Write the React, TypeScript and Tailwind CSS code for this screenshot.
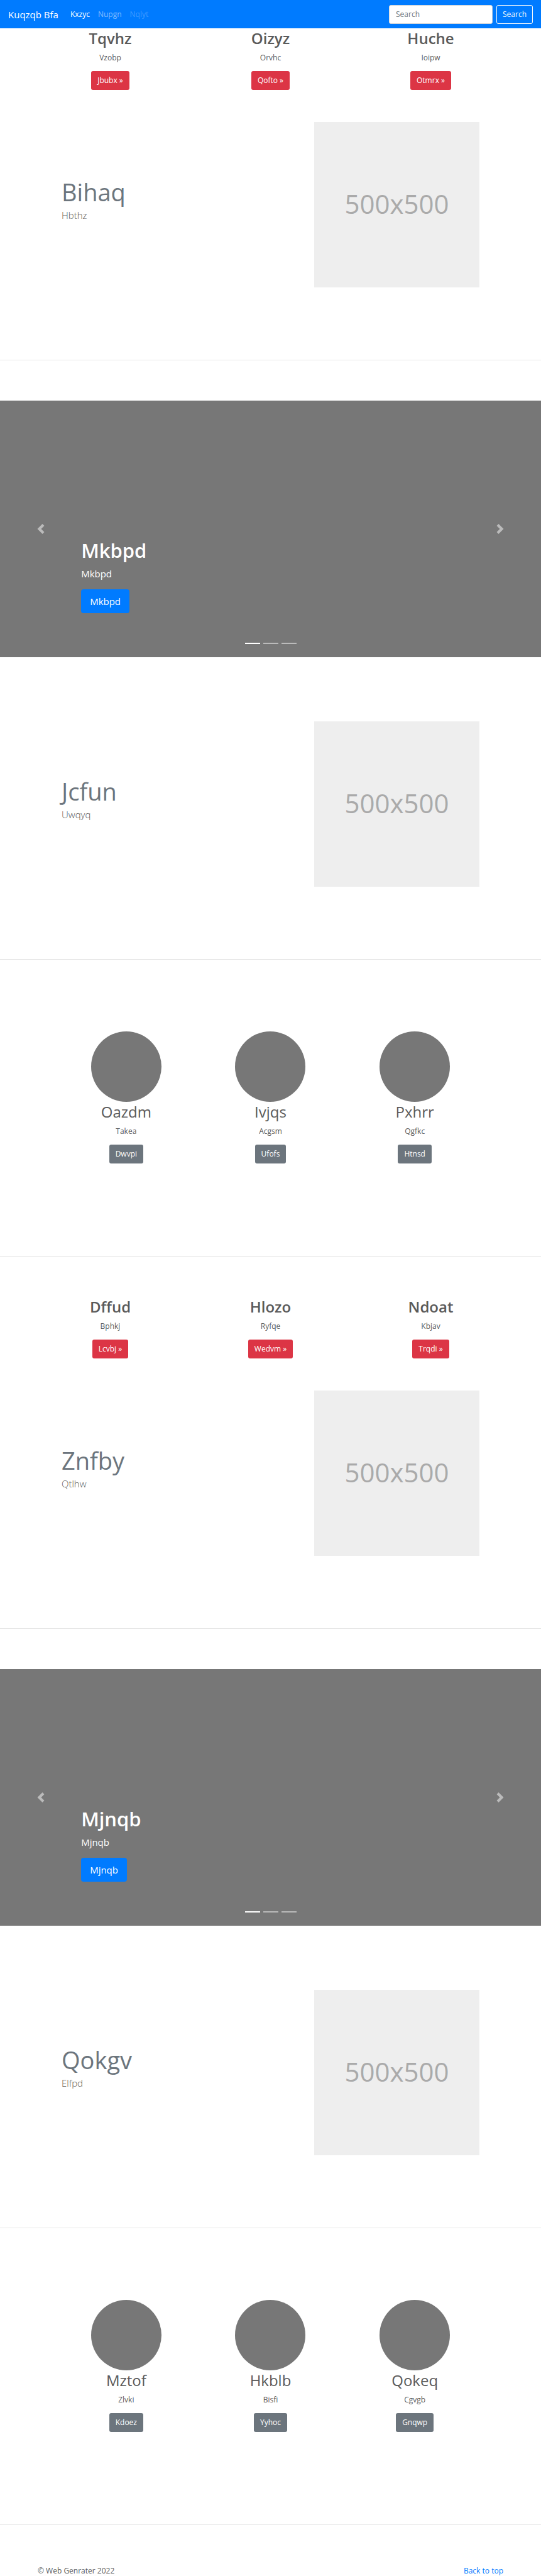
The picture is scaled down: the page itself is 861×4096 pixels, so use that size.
type Item = { title: string; text: string; action: string };
type Feature = { title: string; text: string };
type Group = {
  links: Item[];
  first: Feature;
  slide: string;
  second: Feature;
  circles: Item[];
};

const groups: Group[] = [
  {
    links: [
      { title: "Tqvhz", text: "Vzobp", action: "Jbubx" },
      { title: "Oizyz", text: "Orvhc", action: "Qofto" },
      { title: "Huche", text: "Ioipw", action: "Otmrx" },
    ],
    first: { title: "Bihaq", text: "Hbthz" },
    slide: "Mkbpd",
    second: { title: "Jcfun", text: "Uwqyq" },
    circles: [
      { title: "Oazdm", text: "Takea", action: "Dwvpi" },
      { title: "Ivjqs", text: "Acgsm", action: "Ufofs" },
      { title: "Pxhrr", text: "Qgfkc", action: "Htnsd" },
    ],
  },
  {
    links: [
      { title: "Dffud", text: "Bphkj", action: "Lcvbj" },
      { title: "Hlozo", text: "Ryfqe", action: "Wedvm" },
      { title: "Ndoat", text: "Kbjav", action: "Trqdi" },
    ],
    first: { title: "Znfby", text: "Qtlhw" },
    slide: "Mjnqb",
    second: { title: "Qokgv", text: "Elfpd" },
    circles: [
      { title: "Mztof", text: "Zlvki", action: "Kdoez" },
      { title: "Hkblb", text: "Bisfi", action: "Yyhoc" },
      { title: "Qokeq", text: "Cgvgb", action: "Gnqwp" },
    ],
  },
];

function Navbar() {
  return (
    <header className="flex h-[45px] items-center bg-[#007bff] px-[13px] text-white">
      <a href="#" className="text-[15px] leading-6">Kuqzqb Bfa</a>
      <nav className="ml-[19px] flex gap-[13px] text-xs">
        <a href="#">Kxzyc</a>
        <a href="#" className="text-white/50">Nupgn</a>
        <a href="#" aria-disabled="true" className="text-white/25">Nqlyt</a>
      </nav>
      <form className="ml-auto flex gap-[6px] text-xs" onSubmit={(e) => e.preventDefault()}>
        <input
          type="text"
          aria-label="Search"
          placeholder="Search"
          className="h-[30px] w-[165px] rounded-[3px] border border-[#ced4da] bg-white px-[10px] text-[#495057] placeholder:text-[#6c757d]"
        />
        <button type="submit" className="h-[30px] rounded-[3px] border border-[#f8f9fa] px-[9px] text-[#f8f9fa]">
          Search
        </button>
      </form>
    </header>
  );
}

function Links({ items }: { items: Item[] }) {
  return (
    <section className="mx-auto grid max-w-[765px] grid-cols-3 pb-[13px] text-center">
      {items.map((item) => (
        <div key={item.title} className="flex flex-col items-center">
          <h2 className="mb-[6px] text-2xl leading-[31px] font-semibold">{item.title}</h2>
          <p className="mb-3 text-xs leading-[19px]">{item.text}</p>
          <a href="#" className="flex h-[30px] items-center rounded-[3px] bg-[#dc3545] px-[10px] text-xs text-white">
            {item.action} »
          </a>
        </div>
      ))}
    </section>
  );
}

function Featurette({ title, text }: Feature) {
  return (
    <section className="mx-auto flex max-w-[765px] justify-between px-[50px] pt-[38px] pb-[51px]">
      <div className="pt-[87px]">
        <h2 className="mb-px text-[38px] leading-[48px] text-[#6c757d]">{title}</h2>
        <p className="text-[15px] leading-6 font-light">{text}</p>
      </div>
      <div className="flex size-[263px] items-center justify-center bg-[#eee] pb-1 text-[42px] text-[#aaa]">
        500x500
      </div>
    </section>
  );
}

function Rule() {
  return <hr className="my-16 border-t border-black/10" />;
}

function Chevron({ flip }: { flip?: boolean }) {
  return (
    <svg viewBox="0 0 8 8" className="size-4 fill-white" aria-hidden="true">
      {flip ? (
        <path d="M2.75 0l-1.5 1.5 2.5 2.5-2.5 2.5 1.5 1.5 4-4-4-4z" />
      ) : (
        <path d="M5.25 0l-4 4 4 4 1.5-1.5-2.5-2.5 2.5-2.5-1.5-1.5z" />
      )}
    </svg>
  );
}

function Carousel({ title }: { title: string }) {
  return (
    <section className="relative mb-16 flex h-[408px] bg-[#777] text-white">
      <button type="button" aria-label="Previous" className="flex w-[15%] items-center justify-center opacity-50">
        <Chevron />
      </button>
      <div className="flex flex-1 flex-col items-start justify-end pb-[70px]">
        <h1 className="mb-[6px] text-[31px] leading-[38px] font-semibold">{title}</h1>
        <p className="mb-[13px] text-[15px] leading-6">{title}</p>
        <a href="#" className="flex h-[38px] items-center rounded-[4px] bg-[#007bff] px-[14px] text-[15px]">
          {title}
        </a>
      </div>
      <button type="button" aria-label="Next" className="flex w-[15%] items-center justify-center opacity-50">
        <Chevron flip />
      </button>
      <div className="absolute inset-x-0 bottom-[21px] flex justify-center gap-[5px]">
        <span className="h-[2px] w-6 bg-white" />
        <span className="h-[2px] w-6 bg-white/50" />
        <span className="h-[2px] w-6 bg-white/50" />
      </div>
    </section>
  );
}

function Circles({ items }: { items: Item[] }) {
  return (
    <section className="mx-auto grid max-w-[765px] grid-cols-3 px-[38px] pt-[50px] pb-[83px] text-center">
      {items.map((item) => (
        <div key={item.title} className="flex flex-col items-center">
          <div className="size-28 rounded-full bg-[#777]" />
          <h2 className="mb-[6px] text-2xl leading-[31px] font-normal">{item.title}</h2>
          <p className="mb-3 text-xs leading-[19px]">{item.text}</p>
          <a href="#" className="flex h-[30px] items-center rounded-[3px] bg-[#6c757d] px-[10px] text-xs text-white">
            {item.action}
          </a>
        </div>
      ))}
    </section>
  );
}

export default function App() {
  return (
    <div className="bg-white font-['Open_Sans','Noto_Sans',sans-serif] text-[#5a5a5a]">
      <Navbar />
      <main>
        {groups.map((group) => (
          <div key={group.slide} className="flow-root">
            <Links items={group.links} />
            <Featurette {...group.first} />
            <Rule />
            <Carousel title={group.slide} />
            <Featurette {...group.second} />
            <Rule />
            <Circles items={group.circles} />
            <Rule />
          </div>
        ))}
      </main>
      <footer className="mx-auto flex max-w-[765px] justify-between px-3 text-xs leading-[17px]">
        <p>© Web Genrater 2022</p>
        <a href="#" className="text-[#007bff]">Back to top</a>
      </footer>
    </div>
  );
}
